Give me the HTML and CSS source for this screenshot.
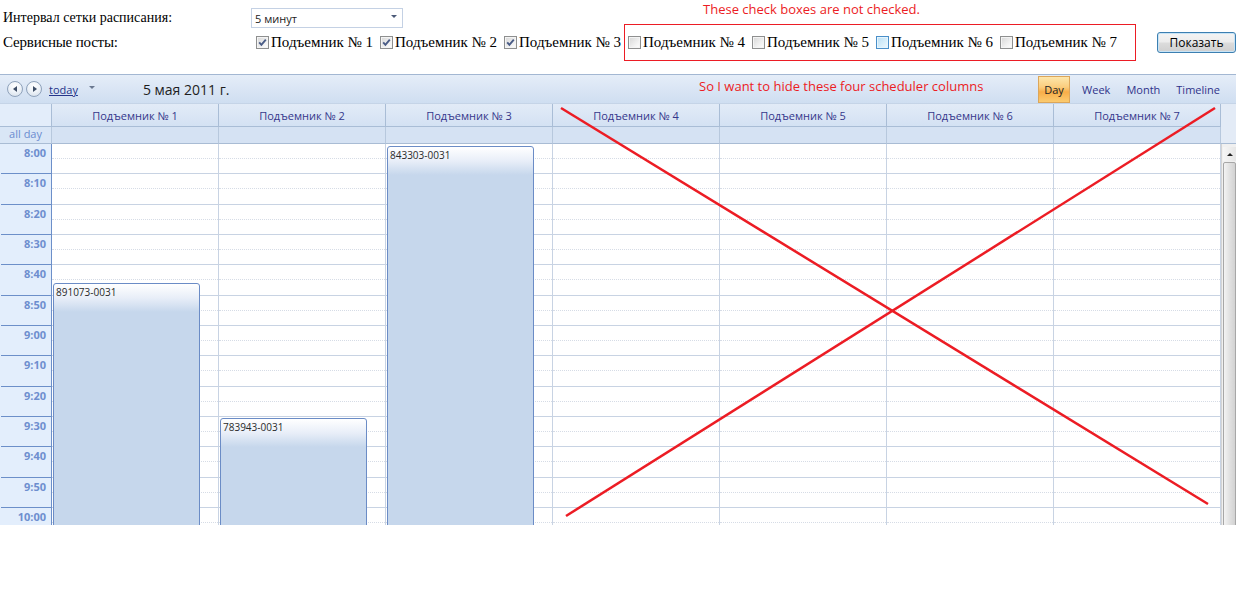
FILE: index.html
```html
<!DOCTYPE html>
<html>
<head>
<meta charset="utf-8">
<link rel="stylesheet" href="styles.css">
</head>
<body>
<div class="page">
  <div class="form">
    <div class="row1">
      <span class="label">Интервал сетки расписания:</span>
      <div class="select"><span>5 минут</span><span class="arrow"></span></div>
      <span class="note note-top">These check boxes are not checked.</span>
    </div>
    <div class="row2">
      <span class="label">Сервисные посты:</span>
      <label class="cb"><span class="box"><svg viewBox="0 0 11 11"><path d="M2.2 5.4 L4.4 7.8 L8.8 2.6"/></svg></span>Подъемник № 1</label>
      <label class="cb"><span class="box"><svg viewBox="0 0 11 11"><path d="M2.2 5.4 L4.4 7.8 L8.8 2.6"/></svg></span>Подъемник № 2</label>
      <label class="cb"><span class="box"><svg viewBox="0 0 11 11"><path d="M2.2 5.4 L4.4 7.8 L8.8 2.6"/></svg></span>Подъемник № 3</label>
      <div class="redbox">
        <label class="cb"><span class="box"></span>Подъемник № 4</label>
        <label class="cb"><span class="box"></span>Подъемник № 5</label>
        <label class="cb"><span class="box hover"></span>Подъемник № 6</label>
        <label class="cb"><span class="box"></span>Подъемник № 7</label>
      </div>
      <button class="btn">Показать</button>
    </div>
  </div>

  <div class="scheduler">
    <div class="toolbar">
      <span class="nav"><span class="tri-left"></span></span>
      <span class="nav"><span class="tri-right"></span></span>
      <a class="today">today</a>
      <span class="dd-arrow"></span>
      <span class="date">5 мая 2011 г.</span>
      <span class="note note-bar">So I want to hide these four scheduler columns</span>
      <div class="views">
        <span class="view active">Day</span>
        <span class="view">Week</span>
        <span class="view">Month</span>
        <span class="view">Timeline</span>
      </div>
    </div>

    <div class="header">
      <div class="hcell corner"></div>
      <div class="hcell">Подъемник № 1</div>
      <div class="hcell">Подъемник № 2</div>
      <div class="hcell">Подъемник № 3</div>
      <div class="hcell">Подъемник № 4</div>
      <div class="hcell">Подъемник № 5</div>
      <div class="hcell">Подъемник № 6</div>
      <div class="hcell">Подъемник № 7</div>
      <div class="hcell filler"></div>
    </div>

    <div class="allday">
      <div class="acell corner">all day</div>
      <div class="acell"></div>
      <div class="acell"></div>
      <div class="acell"></div>
      <div class="acell"></div>
      <div class="acell"></div>
      <div class="acell"></div>
      <div class="acell"></div>
      <div class="acell filler"></div>
    </div>

    <div class="body">
      <div class="times">
        <div class="tslot">8:00</div>
        <div class="tslot">8:10</div>
        <div class="tslot">8:20</div>
        <div class="tslot">8:30</div>
        <div class="tslot">8:40</div>
        <div class="tslot">8:50</div>
        <div class="tslot">9:00</div>
        <div class="tslot">9:10</div>
        <div class="tslot">9:20</div>
        <div class="tslot">9:30</div>
        <div class="tslot">9:40</div>
        <div class="tslot">9:50</div>
        <div class="tslot">10:00</div>
      </div>
      <div class="day">
        <div class="slot"></div><div class="slot"></div><div class="slot"></div><div class="slot"></div><div class="slot"></div><div class="slot"></div><div class="slot"></div><div class="slot"></div><div class="slot"></div><div class="slot"></div><div class="slot"></div><div class="slot"></div><div class="slot"></div>
        <div class="event" style="top:138.5px">891073-0031</div>
      </div>
      <div class="day">
        <div class="slot"></div><div class="slot"></div><div class="slot"></div><div class="slot"></div><div class="slot"></div><div class="slot"></div><div class="slot"></div><div class="slot"></div><div class="slot"></div><div class="slot"></div><div class="slot"></div><div class="slot"></div><div class="slot"></div>
        <div class="event" style="top:274px">783943-0031</div>
      </div>
      <div class="day">
        <div class="slot"></div><div class="slot"></div><div class="slot"></div><div class="slot"></div><div class="slot"></div><div class="slot"></div><div class="slot"></div><div class="slot"></div><div class="slot"></div><div class="slot"></div><div class="slot"></div><div class="slot"></div><div class="slot"></div>
        <div class="event" style="top:2px">843303-0031</div>
      </div>
      <div class="day">
        <div class="slot"></div><div class="slot"></div><div class="slot"></div><div class="slot"></div><div class="slot"></div><div class="slot"></div><div class="slot"></div><div class="slot"></div><div class="slot"></div><div class="slot"></div><div class="slot"></div><div class="slot"></div><div class="slot"></div>
      </div>
      <div class="day">
        <div class="slot"></div><div class="slot"></div><div class="slot"></div><div class="slot"></div><div class="slot"></div><div class="slot"></div><div class="slot"></div><div class="slot"></div><div class="slot"></div><div class="slot"></div><div class="slot"></div><div class="slot"></div><div class="slot"></div>
      </div>
      <div class="day">
        <div class="slot"></div><div class="slot"></div><div class="slot"></div><div class="slot"></div><div class="slot"></div><div class="slot"></div><div class="slot"></div><div class="slot"></div><div class="slot"></div><div class="slot"></div><div class="slot"></div><div class="slot"></div><div class="slot"></div>
      </div>
      <div class="day">
        <div class="slot"></div><div class="slot"></div><div class="slot"></div><div class="slot"></div><div class="slot"></div><div class="slot"></div><div class="slot"></div><div class="slot"></div><div class="slot"></div><div class="slot"></div><div class="slot"></div><div class="slot"></div><div class="slot"></div>
      </div>
      <div class="scrollbar">
        <div class="sb-up"><span class="sb-tri"></span></div>
        <div class="sb-thumb"></div>
      </div>
    </div>
  </div>

  <svg class="xmark" width="1236" height="606" viewBox="0 0 1236 606">
    <line x1="561" y1="108" x2="1208" y2="504"/>
    <line x1="566" y1="516" x2="1215" y2="108"/>
  </svg>
</div>
</body>
</html>
```

FILE: styles.css
```css
* { box-sizing: border-box; }

body {
  margin: 0;
  background: #fff;
  font-family: "Liberation Serif", "Times New Roman", serif;
  color: #000;
}

.page {
  position: relative;
  width: 1236px;
  height: 606px;
  overflow: hidden;
}

/* ---------- form ---------- */
.form { padding-left: 3px; }

.row1 {
  display: flex;
  align-items: flex-start;
  height: 28px;
}
.row1 .label {
  width: 248px;
  flex: none;
  margin-top: 9px;
  font-size: 14px;
  line-height: 17px;
}
.select {
  margin-top: 8px;
  width: 152px;
  height: 20px;
  flex: none;
  border: 1px solid #c4d1e4;
  background: #fff;
  display: flex;
  align-items: center;
  justify-content: space-between;
  padding: 0 5px 0 3px;
  font: 11px "Open Sans", sans-serif;
  color: #222;
}
.select .arrow {
  width: 0;
  height: 0;
  border-left: 3px solid transparent;
  border-right: 3px solid transparent;
  border-top: 3px solid #4b5a78;
  margin-top: -3px;
}
.note {
  color: #ec1c24;
  font-family: "Open Sans", sans-serif;
  font-size: 13px;
  line-height: normal;
  white-space: nowrap;
}
.note-top {
  margin-left: 300px;
  margin-top: 0;
}

.row2 {
  display: flex;
  align-items: center;
  height: 28px;
  font-size: 15px;
}
.row2 .label { width: 253px; flex: none; letter-spacing: -0.2px; }

.cb {
  width: 124px;
  flex: none;
  display: flex;
  align-items: center;
  white-space: nowrap;
}
.box {
  width: 13px;
  height: 13px;
  flex: none;
  margin-right: 2px;
  border: 1px solid #8e8f8f;
  box-shadow: inset 0 0 0 1px #f4f4f4;
  background: linear-gradient(135deg, #d6d6d6 0%, #f0f0f0 60%, #ffffff 100%);
  display: flex;
  align-items: center;
  justify-content: center;
}
.box svg { width: 11px; height: 11px; }
.box path {
  fill: none;
  stroke: #4a5c86;
  stroke-width: 1.9;
}
.box.hover {
  border-color: #4a8fc9;
  box-shadow: inset 0 0 0 1px #e6f5fd;
  background: linear-gradient(135deg, #b9def4 0%, #d9effb 60%, #eef8fe 100%);
}

.redbox {
  display: flex;
  align-items: center;
  height: 37px;
  flex: none;
  border: 1px solid #ec1c24;
  margin-left: -4px;
  padding: 0 11px 0 3px;
}

.btn {
  margin-left: 21px;
  width: 79px;
  height: 21px;
  flex: none;
  padding: 0;
  border: 1px solid #3c7fb1;
  border-radius: 3px;
  background: linear-gradient(#f4f4f4 0%, #ececec 48%, #dcdcdc 52%, #cfcfcf 100%);
  box-shadow: inset 0 0 0 1px #c8e4f6;
  font: 12px "Open Sans", sans-serif;
  color: #000;
}

/* ---------- scheduler ---------- */
.scheduler {
  margin-top: 18px;
  font-family: "Open Sans", sans-serif;
}

.toolbar {
  position: relative;
  height: 29px;
  border-top: 1px solid #a3b7d2;
  background: linear-gradient(#e5edf8, #cfdef1);
  display: flex;
  align-items: center;
  padding-left: 7px;
}
.nav {
  width: 16px;
  height: 16px;
  border-radius: 50%;
  border: 1px solid #8fa2bb;
  background: radial-gradient(circle at 50% 30%, #ffffff 0%, #edf2f8 50%, #d2dce8 100%);
  display: flex;
  align-items: center;
  justify-content: center;
  margin-right: 3px;
  flex: none;
}
.tri-left {
  width: 0; height: 0;
  border-top: 3.5px solid transparent;
  border-bottom: 3.5px solid transparent;
  border-right: 4px solid #3d4d66;
  margin-left: -1px;
}
.tri-right {
  width: 0; height: 0;
  border-top: 3.5px solid transparent;
  border-bottom: 3.5px solid transparent;
  border-left: 4px solid #3d4d66;
  margin-left: 1px;
}
.today {
  margin-left: 4px;
  font-size: 11px;
  color: #26358a;
  text-decoration: underline;
}
.dd-arrow {
  margin-left: 11px;
  width: 0; height: 0;
  border-left: 3px solid transparent;
  border-right: 3px solid transparent;
  border-top: 3px solid #6a7890;
  margin-top: -3px;
}
.date {
  margin-left: 48px;
  font-size: 14px;
  color: #1e1e1e;
  margin-top: 1px;
}
.note-bar {
  position: absolute;
  left: 699px;
  top: 2px;
}
.views {
  margin-left: auto;
  display: flex;
  align-items: center;
  height: 100%;
  padding-right: 10px;
}
.view {
  font-size: 11px;
  color: #30338a;
  padding: 0 6px;
  margin-left: 4px;
}
.view.active {
  margin-left: 0;
  margin-right: 2px;
  height: 27px;
  width: 32px;
  padding: 0;
  display: flex;
  align-items: center;
  justify-content: center;
  color: #222;
  border: 1px solid #dca65a;
  background: linear-gradient(#fde6ab 0%, #fbcd7e 40%, #f8ad48 60%, #fbcb70 100%);
}

.header, .allday, .body {
  display: grid;
  grid-template-columns: 52px repeat(7, 167px) 15px;
}

.header {
  height: 24px;
  background: linear-gradient(#e2ebf7, #d3e1f3);
  border-top: 1px solid #c5d4e7;
}
.hcell {
  border-right: 1px solid #a9bdd6;
  border-bottom: 1px solid #a9bdd6;
  display: flex;
  align-items: center;
  justify-content: center;
  font-size: 11px;
  color: #35378b;
  white-space: nowrap;
}
.hcell.corner { background: #e3edfa; }
.hcell.filler { border-right: none; border-bottom: none; background: #e3ebf6; }

.allday {
  height: 17px;
  background: #d5e2f3;
}
.acell {
  border-right: 1px solid #b7c8dd;
  border-bottom: 1px solid #a9bcd4;
}
.acell.corner {
  background: #d9e6f6;
  font-size: 11px;
  color: #6b8cd0;
  text-align: right;
  padding-right: 9px;
  line-height: 14px;
}
.acell.filler { border-right: none; background: #e3ebf6; }

.body {
  height: 381px;
  overflow: hidden;
}

.times {
  background: #e3eefc;
  border-right: 1px solid #6c8fc9;
}
.tslot {
  height: 30.333px;
  border-bottom: 1px solid #6c8fc9;
  margin-left: 1px;
  text-align: right;
  padding-right: 5px;
  padding-top: 1px;
  font-size: 11px;
  font-weight: 700;
  color: #6e8ecf;
  line-height: 15px;
}

.day {
  position: relative;
  border-right: 1px solid #c8d3e3;
  background: #fff;
}
.slot {
  position: relative;
  height: 30.333px;
  border-bottom: 1px solid #c8d3e3;
}
.slot::after {
  content: "";
  position: absolute;
  left: 0;
  right: 0;
  top: 14px;
  border-top: 1px dotted #d6dce6;
}

.event {
  position: absolute;
  left: 1px;
  width: 147px;
  height: 500px;
  border: 1px solid #6b8cc6;
  border-radius: 3px 3px 0 0;
  background: linear-gradient(#ffffff 0px, #e8eef8 14px, #c6d7ec 28px, #c6d7ec 100%);
  font-size: 10px;
  color: #2a2a2a;
  padding: 1px 2px;
  line-height: 14px;
}

.scrollbar {
  background: #f0f0f0;
  border-left: 1px solid #d4d4d4;
  padding-top: 3px;
  display: flex;
  flex-direction: column;
  align-items: flex-end;
}
.sb-up {
  width: 13px;
  height: 14px;
  display: flex;
  align-items: center;
  justify-content: center;
  background: linear-gradient(90deg, #f6f6f6, #e6e6e6);
}
.sb-tri {
  width: 0; height: 0;
  border-left: 3px solid transparent;
  border-right: 3px solid transparent;
  border-bottom: 3px solid #222;
}
.sb-thumb {
  width: 13px;
  flex: 1;
  margin-top: 1px;
  border: 1px solid #a7a7a7;
  border-radius: 2px 2px 0 0;
  background: linear-gradient(90deg, #f3f3f3, #dedede 60%, #d2d2d2);
}

.xmark {
  position: absolute;
  left: 0;
  top: 0;
  pointer-events: none;
}
.xmark line {
  stroke: #ec1c24;
  stroke-width: 2.5;
}
```
